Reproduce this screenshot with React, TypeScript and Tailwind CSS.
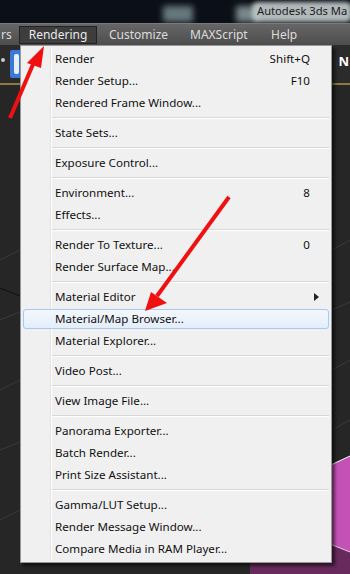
import React from "react";

type Item = { label: string; key?: string; sub?: boolean; hot?: boolean };

const groups: Item[][] = [
  [
    { label: "Render", key: "Shift+Q" },
    { label: "Render Setup...", key: "F10" },
    { label: "Rendered Frame Window..." },
  ],
  [{ label: "State Sets..." }],
  [{ label: "Exposure Control..." }],
  [{ label: "Environment...", key: "8" }, { label: "Effects..." }],
  [{ label: "Render To Texture...", key: "0" }, { label: "Render Surface Map..." }],
  [
    { label: "Material Editor", sub: true },
    { label: "Material/Map Browser...", hot: true },
    { label: "Material Explorer..." },
  ],
  [{ label: "Video Post..." }],
  [{ label: "View Image File..." }],
  [{ label: "Panorama Exporter..." }, { label: "Batch Render..." }, { label: "Print Size Assistant..." }],
  [{ label: "Gamma/LUT Setup..." }, { label: "Render Message Window..." }, { label: "Compare Media in RAM Player..." }],
];

function MenuRow({ it }: { it: Item }) {
  return (
    <div className="relative flex h-[22px] items-center pl-[34px] pr-[21px]">
      {it.hot && (
        <div className="absolute inset-x-[2px] inset-y-[1px] rounded-[3px] border border-[#a9c9ef] bg-gradient-to-b from-[#f4f8fd] to-[#e3edf9]" />
      )}
      <span className="relative flex-1 text-[#101010]">{it.label}</span>
      {it.key && <span className="relative text-[#101010]">{it.key}</span>}
      {it.sub && (
        <svg className="absolute right-[12px]" width="5" height="8" viewBox="0 0 5 8">
          <path d="M0 0 L5 4 L0 8 Z" fill="#222" />
        </svg>
      )}
    </div>
  );
}

export default function App() {
  return (
    <div
      className="relative h-[574px] w-[350px] overflow-hidden bg-[#262626] text-[11.6px]"
      style={{ fontFamily: '"Noto Sans", "Noto Sans CJK KR", sans-serif' }}
    >
      {/* title bar */}
      <div className="relative h-[23px] overflow-hidden bg-[#0b0f17]">
        <div className="absolute left-[163px] top-[6px] h-[16px] w-[30px] bg-[#8fa6a8] opacity-70 blur-[3px]" />
        <div className="absolute left-[236px] top-[6px] h-[16px] w-[22px] bg-[#a7bcbc] opacity-70 blur-[3px]" />
        <div className="absolute left-[252px] top-[2px] h-[20px] w-[100px] rounded-[6px] bg-[#c3cccc] opacity-90 blur-[2px]" />
        <span className="absolute left-[257px] top-[3px] whitespace-nowrap text-[11.2px] text-[#1c2026]">
          Autodesk 3ds Ma
        </span>
      </div>

      {/* menu bar */}
      <div className="flex h-[22px] items-center border-t border-[#7a7a7a] bg-gradient-to-b from-[#666] to-[#4d4d4d] text-[12px] text-[#dcdcdc]">
        <span className="ml-[1px] w-[18px]">rs</span>
        <span className="flex h-[18px] w-[78px] items-center justify-center border border-[#222] bg-[#3d3d3d] text-[#e8e8e8]">
          Rendering
        </span>
        <span className="ml-[12px] w-[81px]">Customize</span>
        <span className="w-[81px]">MAXScript</span>
        <span>Help</span>
      </div>

      {/* toolbar */}
      <div className="flex h-[40px] items-start border-b-2 border-[#8c7a3a] bg-[#2b2b2b] pt-[5px]">
        <div className="ml-[1px] mt-[8px] h-[4px] w-[4px] rounded-full bg-[#ccc]" />
        <div className="ml-[5px] flex h-[28px] w-[12px] items-center justify-center rounded-[2px] bg-[#3b78d8]">
          <div className="h-[20px] w-[5px] rounded-[2px] bg-[#e8eef8]" />
        </div>
        <div className="ml-auto mr-[6px] mt-[5px] h-[18px] w-[1px] bg-[#9a9a9a]" />
        <span className="mr-[1px] mt-[2px] text-[13px] font-bold text-white">N</span>
      </div>

      {/* viewport grid */}
      <svg className="absolute left-0 top-[90px]" width="350" height="484">
        <g stroke="#3a3a3a" strokeWidth="1">
          <line x1="0" y1="170" x2="20" y2="160" />
          <line x1="0" y1="230" x2="20" y2="222" />
          <line x1="0" y1="300" x2="20" y2="290" />
          <line x1="0" y1="360" x2="20" y2="352" />
          <line x1="0" y1="430" x2="20" y2="420" />
          <line x1="332" y1="160" x2="350" y2="150" />
          <line x1="332" y1="220" x2="350" y2="212" />
          <line x1="332" y1="280" x2="350" y2="270" />
          <line x1="332" y1="340" x2="350" y2="330" />
        </g>
        <line x1="0" y1="198" x2="20" y2="206" stroke="#111" />
        <polygon points="320,380 350,366 350,462 320,450" fill="#c452b6" />
        <polygon points="250,474 320,450 350,462 350,484 250,484" fill="#682a5c" />
        <line x1="320" y1="380" x2="350" y2="366" stroke="#fff" strokeWidth="1" />
        <line x1="320" y1="450" x2="350" y2="462" stroke="#e8d0e4" strokeWidth="1" />
      </svg>

      {/* dropdown menu */}
      <div className="absolute left-[20px] top-[45px] w-[312px] border border-[#979797] bg-[#f0f0f0] py-[2px] shadow-[3px_3px_3px_rgba(0,0,0,0.55)]">
        <div className="absolute bottom-[2px] left-[29px] top-[2px] w-[2px] border-l border-[#e2e2e2] bg-white" />
        {groups.map((g, gi) => (
          <div key={gi}>
            {gi > 0 && (
              <div className="flex h-[8px] items-center pl-[30px] pr-[2px]">
                <div className="h-[2px] w-full border-t border-[#d7d7d7] bg-white" />
              </div>
            )}
            {g.map((it) => (
              <MenuRow key={it.label} it={it} />
            ))}
          </div>
        ))}
      </div>

      {/* red arrows */}
      <svg className="pointer-events-none absolute left-0 top-0" width="350" height="574">
        <line x1="10" y1="118" x2="34" y2="62" stroke="#f01010" strokeWidth="4" />
        <polygon points="44,46 27,63 41,68" fill="#f01010" />
        <line x1="229" y1="197" x2="157" y2="296" stroke="#f01010" strokeWidth="4" />
        <polygon points="145,311 151,292 167,303" fill="#f01010" />
      </svg>
    </div>
  );
}
